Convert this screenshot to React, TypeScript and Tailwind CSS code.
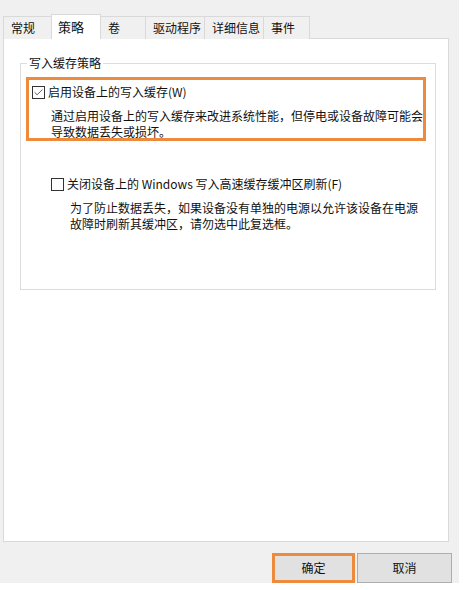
import { Check } from "lucide-react";

const tabs = ["常规", "策略", "卷", "驱动程序", "详细信息", "事件"];
const tabWidths = ["w-[49px]", "w-[50px]", "w-[46px]", "w-[60px]", "w-[60px]", "w-[47px]"];

function Box({ checked }: { checked?: boolean }) {
  return (
    <div className="w-[13px] h-[13px] border border-[#333] bg-white flex items-center justify-center shrink-0">
      {checked && <Check size={11} strokeWidth={1.6} className="text-[#222]" />}
    </div>
  );
}

export default function App() {
  return (
    <div
      className="w-[472px] h-[590px] bg-white overflow-hidden text-[12px] text-[#111]"
      style={{ fontFamily: '"Noto Sans CJK SC", "Noto Sans", sans-serif' }}
    >
      <div className="w-[459px] h-[583px] bg-[#f0f0f0] flex flex-col overflow-hidden">
        {/* Tabs */}
        <div className="flex items-end pl-[3px] pt-[14px] h-[39px] relative z-10">
          {tabs.map((t, i) =>
            i === 1 ? (
              <div
                key={t}
                className={`${tabWidths[i]} h-[25px] shrink-0 bg-white border border-b-0 border-[#d9d9d9] -ml-px flex items-center pl-[6px] whitespace-nowrap text-[13px] leading-none pb-[2px]`}
              >
                {t}
              </div>
            ) : (
              <div
                key={t}
                className={`${tabWidths[i]} h-[23px] shrink-0 bg-[#f0f0f0] border border-b-0 border-[#d9d9d9] ${i === 0 ? "" : "-ml-px"} flex items-center pl-[7px] whitespace-nowrap text-[12px] leading-none`}
              >
                {t}
              </div>
            )
          )}
        </div>

        {/* Panel */}
        <div className="ml-[3px] w-[446px] h-[506px] -mt-px bg-white border border-[#d9d9d9] pt-[24px] pl-[16px]">
          <div className="relative w-[416px] h-[227px] border border-[#dcdcdc] pt-[13px] pl-[5px]">
            <div className="absolute -top-[9px] left-[6px] bg-white px-[2px] leading-[16px]">写入缓存策略</div>

            <div className="w-[400px] h-[64px] border-[3px] border-[#ec8a3e] pt-[5px] pl-[3px]">
              <div className="flex items-center gap-[3px] leading-[14px]">
                <Box checked />
                <span>启用设备上的写入缓存(W)</span>
              </div>
              <div className="pl-[19px] mt-[9px] leading-[16px]">
                <div>通过启用设备上的写入缓存来改进系统性能，但停电或设备故障可能会</div>
                <div>导致数据丢失或损坏。</div>
              </div>
            </div>

            <div className="pl-[25px] mt-[36px]">
              <div className="flex items-center gap-[3px] leading-[14px]">
                <Box />
                <span>关闭设备上的 Windows 写入高速缓存缓冲区刷新(F)</span>
              </div>
              <div className="pl-[19px] mt-[9px] leading-[16px]">
                <div>为了防止数据丢失，如果设备没有单独的电源以允许该设备在电源</div>
                <div>故障时刷新其缓冲区，请勿选中此复选框。</div>
              </div>
            </div>
          </div>
        </div>

        {/* Buttons */}
        <div className="flex justify-end gap-[2px] pr-[7px] mt-[11px]">
          <div className="w-[83px] h-[30px] border-[3px] border-[#ec8a3e] bg-[#e1e1e1] flex items-center justify-center">
            确定
          </div>
          <div className="w-[95px] h-[30px] border border-[#adadad] bg-[#e1e1e1] flex items-center justify-center">
            取消
          </div>
        </div>
      </div>
    </div>
  );
}
